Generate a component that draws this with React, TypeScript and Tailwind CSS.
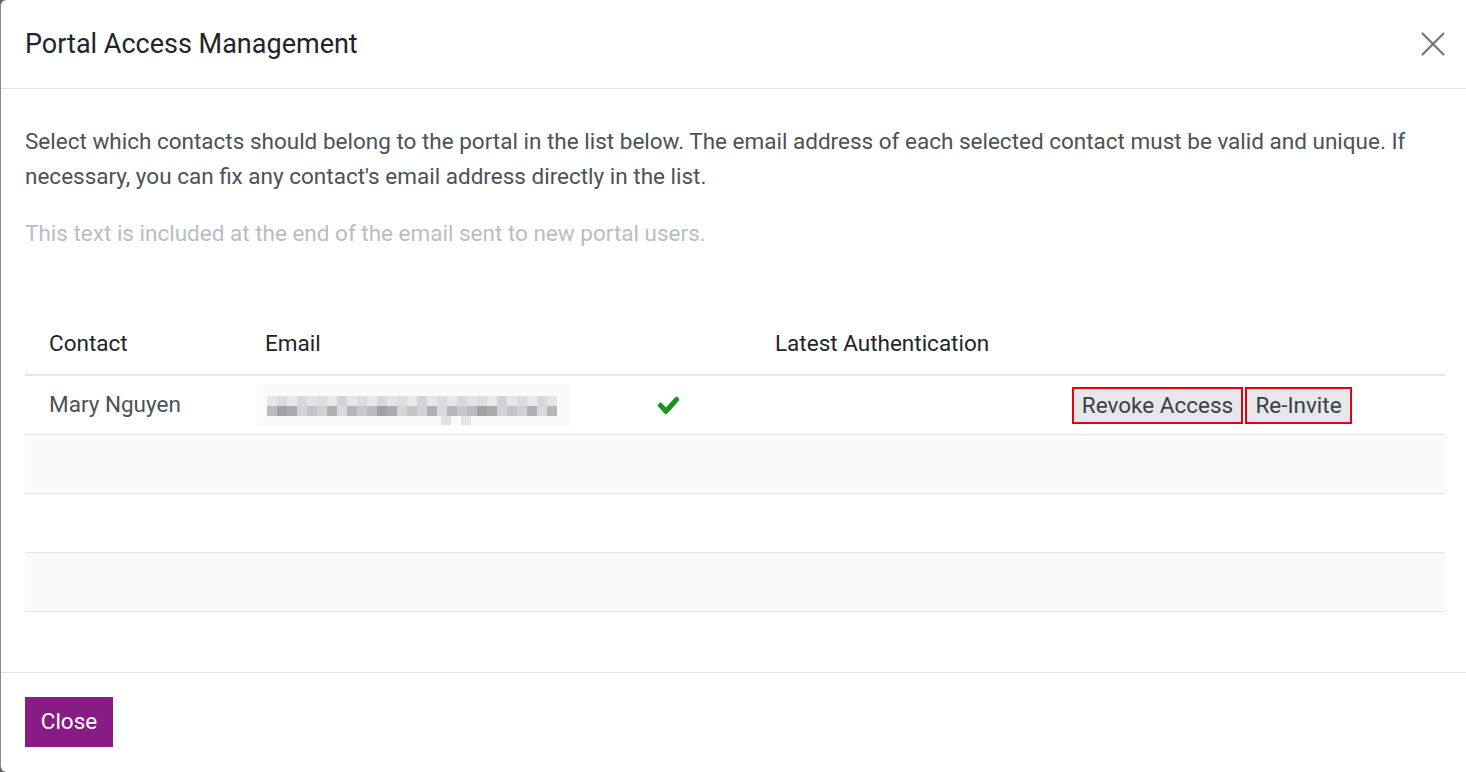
import React from "react";

const blocks: [number, number, number, number, string][] = (() => {
  const out: [number, number, number, number, string][] = [];
  const top = ["#e4e6e8", "#d6d8db", "#e9eaec", "#dadcdf", "#e2e4e6", "#d0d2d5", "#e7e8ea", "#dcdee0"];
  const bot = ["#b9bbbe", "#d2d4d7", "#aeb0b3", "#c6c8cb", "#a9abae", "#cfd1d4", "#b4b6b9", "#9fa1a4", "#c2c4c7", "#d8dadc"];
  for (let i = 0; i < 29; i++) {
    out.push([10 + i * 10, 12, 10, 10, top[(i * 3) % top.length]]);
    out.push([10 + i * 10, 22, 10, 10, bot[(i * 7) % bot.length]]);
  }
  out.push([184, 32, 10, 9, "#dfe1e3"]);
  out.push([204, 32, 10, 9, "#e3e5e7"]);
  return out;
})();

function BlurredEmail() {
  return (
    <svg width="314" height="42" viewBox="0 0 314 42" className="block">
      <rect x="0" y="0" width="314" height="42" fill="#f9fafa" />
      {blocks.map(([x, y, w, h, c], i) => (
        <rect key={i} x={x} y={y} width={w} height={h} fill={c} />
      ))}
    </svg>
  );
}

function Check() {
  return (
    <svg width="21" height="17" viewBox="0 66 512 380" preserveAspectRatio="none">
      <path
        fill="#17951b"
        stroke="#17951b"
        strokeWidth="20"
        d="M173.898 439.404l-166.4-166.4c-9.997-9.997-9.997-26.206 0-36.204l36.203-36.204c9.997-9.998 26.207-9.998 36.204 0L192 312.69 432.095 72.596c9.997-9.997 26.207-9.997 36.204 0l36.203 36.204c9.997 9.997 9.997 26.206 0 36.204l-294.4 294.401c-9.998 9.997-26.207 9.997-36.204-.001z"
      />
    </svg>
  );
}

export default function App() {
  const font = { fontFamily: "Roboto, 'Noto Sans', sans-serif" };
  return (
    <div className="w-[1466px] h-[772px] bg-[#5f5f5f] overflow-hidden" style={font}>
      <div className="h-[772px] bg-white rounded-l-[6px] border-l border-[#8a8a8a] flex flex-col">
        {/* header */}
        <div className="h-[89px] border-b border-[#dee2e6] flex items-center justify-between pl-[24px] pr-[20px] shrink-0">
          <h1 className="text-[27px] text-[#212529] leading-none">Portal Access Management</h1>
          <svg width="26" height="26" viewBox="0 0 26 26">
            <path d="M2 2 L24 24 M24 2 L2 24" stroke="#7a7a7a" strokeWidth="2.4" />
          </svg>
        </div>
        {/* body */}
        <div className="flex-1 px-[24px] pt-[35px]">
          <p className="text-[22.5px] leading-[35px] text-[#4c5157]">
            Select which contacts should belong to the portal in the list below. The email address of each selected contact must be valid and unique. If necessary, you can fix any contact's email address directly in the list.
          </p>
          <p className="mt-[22px] text-[22.5px] leading-[35px] text-[#b8bdc2]">
            This text is included at the end of the email sent to new portal users.
          </p>
          <div className="mt-[62px] w-[1420px] text-[22.5px]">
            <div className="flex h-[63px] items-center border-b-2 border-[#e3e5e8] text-[#212529]">
              <div className="w-[216px] pl-[24px]">Contact</div>
              <div className="w-[394px] pl-[24px]">Email</div>
              <div className="w-[116px]"></div>
              <div className="w-[296px] pl-[24px]">Latest Authentication</div>
              <div className="flex-1"></div>
            </div>
            <div className="flex h-[59px] items-center border-b border-[#e3e5e8] text-[#4c5157]">
              <div className="w-[216px] pl-[24px]">Mary Nguyen</div>
              <div className="w-[394px] pl-[16px]">
                <BlurredEmail />
              </div>
              <div className="w-[116px] pl-[23px] flex items-center">
                <Check />
              </div>
              <div className="w-[296px]"></div>
              <div className="flex-1 pl-[25px] flex items-center gap-[2px]">
                <button className="h-[37px] w-[171px] bg-[#e6e7ea] border-2 border-[#e3000f] text-[#3b4046] text-[22.5px] leading-none">
                  Revoke Access
                </button>
                <button className="h-[37px] w-[107px] bg-[#e6e7ea] border-2 border-[#e3000f] text-[#3b4046] text-[22.5px] leading-none">
                  Re-Invite
                </button>
              </div>
            </div>
            <div className="h-[59px] bg-[#fafafa] border-b border-[#e3e5e8]"></div>
            <div className="h-[59px] bg-white border-b border-[#e3e5e8]"></div>
            <div className="h-[59px] bg-[#fafafa] border-b border-[#e3e5e8]"></div>
          </div>
        </div>
        {/* footer */}
        <div className="h-[100px] border-t border-[#dee2e6] pl-[24px] pt-[24px] shrink-0">
          <button className="h-[50px] w-[88px] bg-[#871c86] text-white text-[22.5px]">Close</button>
        </div>
      </div>
    </div>
  );
}
